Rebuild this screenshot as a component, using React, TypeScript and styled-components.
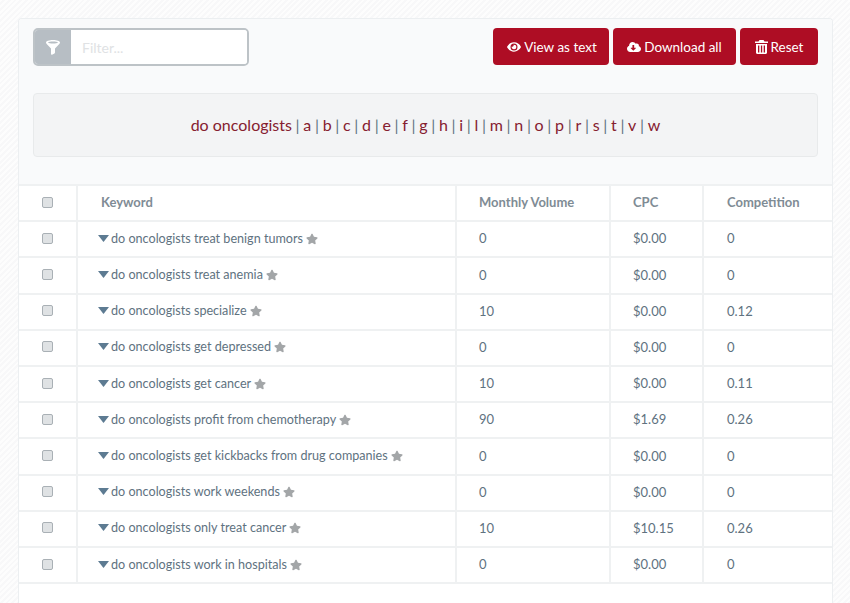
import React from 'react';
import styled, { createGlobalStyle } from 'styled-components';
import { FaEye, FaCloudDownloadAlt, FaStar } from 'react-icons/fa';

const GlobalStyle = createGlobalStyle`
  html, body {
    margin: 0;
    padding: 0;
  }
  body {
    height: 603px;
    overflow: hidden;
    font-family: Lato, "Open Sans", sans-serif;
    background-color: #fbfbfc;
    background-image: repeating-linear-gradient(135deg, #fdfdfd 0, #fdfdfd 2px, #f8f8f9 2px, #f8f8f9 4px);
  }
`;

const Page = styled.div`
  padding: 18px 17px 0 18px;
`;

const Panel = styled.div`
  background: #fff;
  border: 1px solid #eceff1;
  border-bottom: none;
  border-radius: 4px 4px 0 0;
  height: 585px;
  box-sizing: border-box;
  overflow: hidden;
`;

const PanelHead = styled.div`
  background: #f9fafb;
  height: 165px;
  box-sizing: border-box;
  padding: 9px 14px 0 14px;
`;

const Toolbar = styled.div`
  display: flex;
  justify-content: space-between;
`;

const FilterGroup = styled.div`
  display: flex;
  width: 216px;
  height: 38px;
  box-sizing: border-box;
  border: 2px solid #bdc3c7;
  border-radius: 5px;
  overflow: hidden;
`;

const FilterAddon = styled.span`
  width: 36px;
  background: #b7bec4;
  display: flex;
  align-items: center;
  justify-content: center;
`;

const FilterIcon = styled.svg`
  width: 14px;
  height: 15px;
  fill: #fff;
`;

const FilterInput = styled.input`
  flex: 1;
  min-width: 0;
  border: none;
  outline: none;
  background: #fff;
  padding: 0 11px;
  font: 14px Lato, sans-serif;
  &::placeholder {
    color: #e0e2e4;
    opacity: 1;
  }
`;

const Actions = styled.div`
  display: flex;
  gap: 4px;
`;

const ActionButton = styled.button<{ $width: number; $shift?: number }>`
  width: ${(p) => p.$width}px;
  height: 37px;
  padding: 0 0 0 ${(p) => p.$shift ?? 0}px;
  border: none;
  border-radius: 4px;
  background: #ae0d24;
  color: #fff;
  font: 13.5px Lato, sans-serif;
  display: flex;
  align-items: center;
  justify-content: center;
  gap: 3px;
  svg {
    font-size: 14px;
  }
`;

const TrashIcon = styled.svg`
  width: 13px;
  height: 14px;
  fill: #fff;
`;

const Well = styled.div`
  margin-top: 27px;
  height: 64px;
  box-sizing: border-box;
  padding-bottom: 2px;
  background: #f3f4f5;
  border: 1px solid #e8eaeb;
  border-radius: 4px;
  display: flex;
  align-items: center;
  justify-content: center;
  font-size: 16px;
`;

const Letter = styled.a`
  color: #86202f;
  text-decoration: none;
`;

const Sep = styled.span`
  margin: 0 3.7px;
  color: #5f7482;
`;

const Table = styled.table`
  width: 815px;
  border-collapse: collapse;
  table-layout: fixed;
  background: #fff;
  font-size: 13px;
  color: #60727f;
`;

const HeadCell = styled.th`
  height: 36.3px;
  box-sizing: border-box;
  padding: 0 0 2px 22px;
  border: 2px solid #eff1f2;
  text-align: left;
  font-weight: 700;
  color: #7f8c95;
  &:first-child {
    border-left: none;
    padding: 0 0 2px;
    text-align: center;
  }
  &:nth-child(2) {
    padding-left: 23px;
  }
  &:last-child {
    border-right: none;
    padding-left: 23px;
  }
`;

const Cell = styled.td`
  height: 36.2px;
  box-sizing: border-box;
  padding: 0 0 2px 22px;
  border: 2px solid #eff1f2;
  white-space: nowrap;
  &:first-child {
    border-left: none;
    padding: 0 0 2px;
    text-align: center;
  }
  &:last-child {
    border-right: none;
    padding-left: 23px;
  }
`;

const KeywordCell = styled(Cell)`
  padding-left: 20px;
  font-size: 12.6px;
`;

const Check = styled.input.attrs({ type: 'checkbox' })`
  appearance: none;
  display: block;
  margin: 0 auto;
  width: 11px;
  height: 11px;
  background: #dfe2e4;
  border: 1px solid #a9b0b5;
  border-radius: 2px;
`;

const Caret = styled.svg`
  width: 11px;
  height: 7px;
  margin-right: 2px;
  fill: #5d7b92;
  vertical-align: 1px;
`;

const Star = styled(FaStar)`
  font-size: 12px;
  color: #a3a6a8;
  margin-left: 3px;
  vertical-align: -2px;
`;

const letters = 'abcdefghilmnoprstvw'.split('');

const rows = [
  ['do oncologists treat benign tumors', '0', '$0.00', '0'],
  ['do oncologists treat anemia', '0', '$0.00', '0'],
  ['do oncologists specialize', '10', '$0.00', '0.12'],
  ['do oncologists get depressed', '0', '$0.00', '0'],
  ['do oncologists get cancer', '10', '$0.00', '0.11'],
  ['do oncologists profit from chemotherapy', '90', '$1.69', '0.26'],
  ['do oncologists get kickbacks from drug companies', '0', '$0.00', '0'],
  ['do oncologists work weekends', '0', '$0.00', '0'],
  ['do oncologists only treat cancer', '10', '$10.15', '0.26'],
  ['do oncologists work in hospitals', '0', '$0.00', '0'],
];

const App = () => {
  return (
    <Page>
      <GlobalStyle />
      <Panel>
        <PanelHead>
          <Toolbar>
            <FilterGroup>
              <FilterAddon>
                <FilterIcon viewBox="0 0 14 15">
                  <path
                    fillRule="evenodd"
                    d="M7 0C3 0 0 1 0 2.6c0 .5.3 1 .7 1.4L5 8.6V14c0 .6.5 1 1 .8l2-1c.6-.3 1-.7 1-1.3V8.6L13.3 4c.4-.4.7-.9.7-1.4C14 1 11 0 7 0zm0 1.6c2.4 0 4.2.4 5 1-.8.6-2.6 1-5 1s-4.2-.4-5-1c.8-.6 2.6-1 5-1z"
                  />
                </FilterIcon>
              </FilterAddon>
              <FilterInput placeholder="Filter..." />
            </FilterGroup>
            <Actions>
              <ActionButton $width={116} $shift={2}>
                <FaEye /> View as text
              </ActionButton>
              <ActionButton $width={123}>
                <FaCloudDownloadAlt /> Download all
              </ActionButton>
              <ActionButton $width={78}>
                <TrashIcon viewBox="0 0 13 14">
                  <path
                    fillRule="evenodd"
                    d="M4.5 0h4l1 1.5H13V3H0V1.500h3.500L4.500 0zM1 4h11v8.500c0 .9-.6 1.500-1.500 1.500h-8C1.600 14 1 13.400 1 12.500V4zm2 1.500V12.500h1.300V5.500H3zm2.900 0V12.500h1.300V5.500H5.900zm2.800 0V12.500H10V5.500H8.700z"
                  />
                </TrashIcon>
                Reset
              </ActionButton>
            </Actions>
          </Toolbar>
          <Well>
            <Letter href="#">do oncologists</Letter>
            {letters.map((l) => (
              <React.Fragment key={l}>
                <Sep>|</Sep>
                <Letter href="#">{l}</Letter>
              </React.Fragment>
            ))}
          </Well>
        </PanelHead>
        <Table>
          <colgroup>
            <col style={{ width: 58 }} />
            <col style={{ width: 379 }} />
            <col style={{ width: 154 }} />
            <col style={{ width: 93 }} />
            <col style={{ width: 131 }} />
          </colgroup>
          <thead>
            <tr>
              <HeadCell>
                <Check />
              </HeadCell>
              <HeadCell>Keyword</HeadCell>
              <HeadCell>Monthly Volume</HeadCell>
              <HeadCell>CPC</HeadCell>
              <HeadCell>Competition</HeadCell>
            </tr>
          </thead>
          <tbody>
            {rows.map((r) => (
              <tr key={r[0]}>
                <Cell>
                  <Check />
                </Cell>
                <KeywordCell>
                  <Caret viewBox="0 0 11 7">
                    <polygon points="0,0 11,0 5.5,7" />
                  </Caret>
                  {r[0]}
                  <Star />
                </KeywordCell>
                <Cell>{r[1]}</Cell>
                <Cell>{r[2]}</Cell>
                <Cell>{r[3]}</Cell>
              </tr>
            ))}
          </tbody>
        </Table>
      </Panel>
    </Page>
  );
};

export default App;
